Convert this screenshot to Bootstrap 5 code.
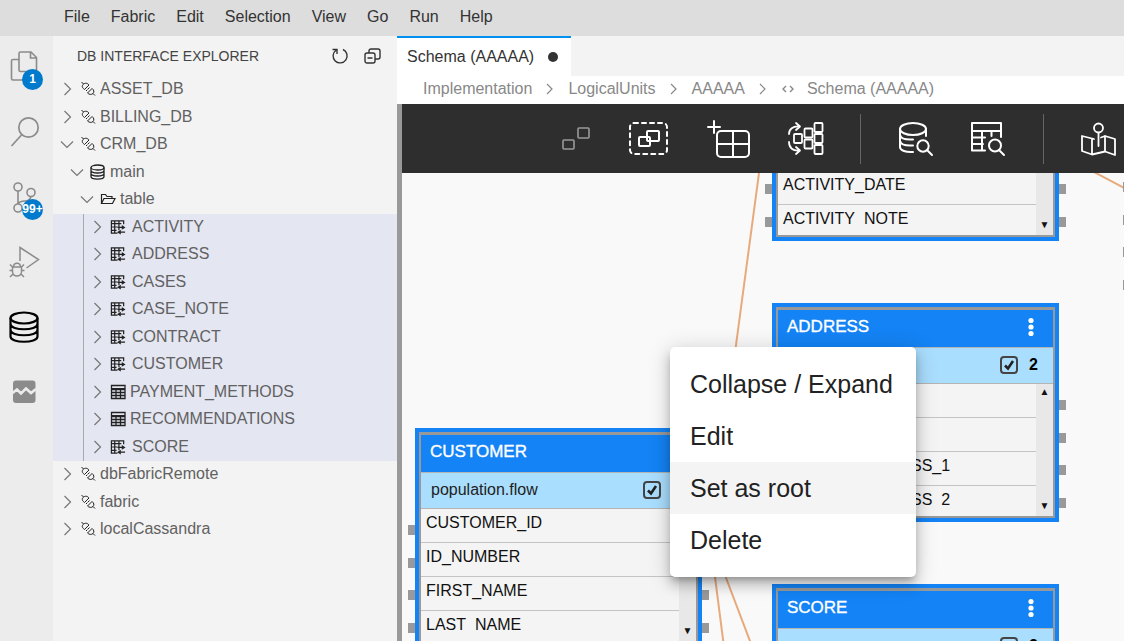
<!DOCTYPE html>
<html lang="en">
<head>
<meta charset="utf-8">
<meta name="viewport" content="width=device-width, initial-scale=1">
<title>Schema (AAAAA)</title>
<link href="https://cdn.jsdelivr.net/npm/bootstrap@5.3.0/dist/css/bootstrap.min.css" rel="stylesheet">
<style>
  body { font-family: "Liberation Sans", Arial, sans-serif; font-size: 16px; line-height: 20px; color: #333; }
  svg { overflow: visible; fill: none; stroke: currentColor; display: block; }
  button { color: inherit; }
  .plain-btn { background: none; border: 0; padding: 0; }

  .menubar { background: #ddd; height: 36px; padding: 0 54px; gap: 1px; }
  .menubar a { color: #333; padding: 0 10px; line-height: 34px; text-decoration: none; }

  .activity { background: #ececec; width: 53px; color: #8b8b8b; }
  .activity button { height: 65px; width: 48px; padding: 0 0 4px 8px; }
  .activity .count { right: 5px; top: 33px; min-width: 21px; height: 21px; line-height: 21px; border-radius: 11px; background: #007acc; color: #fff; font-size: 12px; font-weight: 700; }
  .activity .current { color: #000; }

  .explorer { background: #f3f3f3; width: 344px; }
  .explorer header { height: 40px; padding: 0 15px 0 24px; }
  .explorer h1 { font-size: 14px; line-height: 20px; font-weight: 400; color: #444; }
  .tree li { height: 27px; padding: 0 0 2px 7px; color: #616161; cursor: pointer; }
  .tree li:nth-child(odd) { height: 28px; }
  .tree .twist { width: 14px; height: 14px; margin-right: 6px; color: #777; }
  .tree .glyph { width: 16px; height: 16px; margin-right: 4px; color: #222; }
  .tree .lvl-1 { padding-left: 17px; }
  .tree .lvl-2 { padding-left: 27px; }
  .tree .lvl-3 { padding-left: 37px; background: linear-gradient(#aaa, #aaa) 30px 0 / 1px 100% no-repeat #e4e6f1; }
  .tree .lvl-3 .glyph { margin-right: 6px; }

  .tabs { background: #f3f3f3; height: 40px; }
  .tabs .tab { background: #fff; border-top: 2px solid #0090f1; padding: 0 13px 0 10px; gap: 14px; color: #333; }
  .dirty-dot { width: 10px; height: 10px; border-radius: 5px; background: #333; }
  .crumbs { height: 28px; padding: 0 26px 2px; color: #888; }
  .crumbs a { color: #888; text-decoration: none; }
  .crumbs .sep { margin: 0 12px; }

  .frame { border-left: 5px solid #999; }
  .tools { background: #2e2e2e; height: 69px; padding-left: 160px; gap: 38px; color: #fff; }
  .tools svg { stroke-width: 2; stroke-linejoin: round; stroke-linecap: round; }
  .tools .rule { width: 1px; height: 50px; background: #666; }
  .tools button:disabled { color: #999; }

  .board { background: #f9f9f9; }
  .links { stroke: #e8aa7c; stroke-width: 2; }
  .entity { position: absolute; width: 287px; height: 219px; border: 4px solid #1483f5; background: #999; padding: 3px 2px; color: #111; }
  .entity h2 { background: #1483f5; color: #fff; height: 37px; padding: 0 19px 3px 9px; font-size: 17px; line-height: 20px; -webkit-text-stroke: .02em #fff; }
  .entity .flow { background: #aadefe; border: solid #b4b4b4; border-width: 1px 0; height: 37px; padding: 0 15px 1px 10px; color: #222; gap: 11px; }
  .entity .flow .tick + b { color: #000; }
  .entity .with-count { padding-right: 35px; }
  .entity .fields { height: 132px; background: #f4f4f4; overflow: hidden; }
  .entity .fields li { height: 34px; padding: 4px 0 0 5px; border-bottom: 1px solid #c4c4c4; }
  .entity .fields li:last-child span { display: block; height: 16px; line-height: 20px; overflow: hidden; }
  .entity .scroller { width: 17px; background: #e8e8e8; padding: 4px 0 6px; font-size: 10px; line-height: 8px; }
  .ports { position: absolute; height: 108px; width: 7px; }
  .ports i { height: 10px; background: #999; }
  .entity .ports { top: 93px; }
  .ports.west { left: -11px; }
  .ports.east { right: -11px; }
  .tick { appearance: none; width: 18px; height: 18px; margin: 0; border: 2px solid #444; border-radius: 4px; background: url("data:image/svg+xml,%3Csvg xmlns='http://www.w3.org/2000/svg' viewBox='0 0 14 14'%3E%3Cpath d='M3 7.5l3 3L11 3' fill='none' stroke='%23222' stroke-width='2.6'/%3E%3C/svg%3E"); }

  .popup { position: absolute; left: 268px; top: 174px; width: 246px; padding: 11px 0; background: #fff; border-radius: 5px; box-shadow: 0 5px 6px -3px rgba(0,0,0,.25), 0 8px 12px 1px rgba(0,0,0,.16), 0 3px 22px 2px rgba(0,0,0,.14); }
  .popup button { height: 52px; padding: 0 20px 1px; font-size: 25px; line-height: 30px; color: #222; text-align: left; }
  .popup .hovered { background: #f4f4f4; }
</style>
</head>
<body class="d-flex flex-column vh-100 overflow-hidden">

<svg width="0" height="0" class="position-absolute" aria-hidden="true">
  <symbol id="closed" viewBox="0 0 14 14"><path d="M4.500 1l6 6-6 6" stroke-width="1.200"/></symbol>
  <symbol id="opened" viewBox="0 0 14 14"><path d="M1 4.500l6 6 6-6" stroke-width="1.200"/></symbol>
  <symbol id="plug" viewBox="0 0 16 16"><g stroke-width="1"><path d="M1.500 1l2 2M3 3.500C5 1.500 7.500 2 9 4L4.500 8.500C2.500 7 1.500 5.500 3 3.500Z M8 8l1.500-1.500M6 10l1.500-1.500M12 7.500c2 1.500 2.500 3.500 1 5-1.500 1.500-4 1-5.500-.500Z M13 12.500l2 2"/></g></symbol>
  <symbol id="base" viewBox="0 0 16 16"><g stroke-width="1.300"><ellipse cx="7.500" cy="3.500" rx="6.500" ry="2.500"/><path d="M1 3.500v9c0 3.400 13 3.400 13 0v-9M1 6.500c0 3.300 13 3.300 13 0M1 9.500c0 3.300 13 3.300 13 0"/></g></symbol>
  <symbol id="folder" viewBox="0 0 16 16"><path d="M1.500 12.500v-9h4l1.500 2h5v2M1.500 12.500l2.500-5h11l-2.500 5Z" stroke-width="1.200"/></symbol>
  <symbol id="grid-sync" viewBox="0 0 17 16"><path d="M8 14.500H1.500v-13H14.500V5M1.500 4.500H12M1.500 8H8M1.500 11.500H7M5 1.500v13M9.500 1.500v10" stroke-width="1.300"/><path d="M8 8.500h5M11 13.500h5" stroke-width="1.300"/><path d="M12.500 6l4 2.500-4 2.500ZM11.500 11L7.500 13.500l4 2.500Z" fill="currentColor" stroke="none"/></symbol>
  <symbol id="grid" viewBox="0 0 16 16"><path d="M1.500 1.500h13.500v13H1.500ZM1.500 5.500H15M1.500 8.500H15M1.500 11.500H15M6 5.500v9M10.500 5.500v9" stroke-width="1.300"/><path d="M1.500 4.500H15" stroke-width="1"/></symbol>
  <symbol id="crumb" viewBox="0 0 12 14"><path d="M3 2l5 5-5 5" stroke-width="1.200"/></symbol>
  <symbol id="kebab" viewBox="0 0 6 20"><g fill="currentColor" stroke="none"><circle cx="3" cy="3.500" r="2.600"/><circle cx="3" cy="10" r="2.600"/><circle cx="3" cy="16.500" r="2.600"/></g></symbol>
</svg>

<nav class="menubar d-flex flex-shrink-0" aria-label="Main menu">
  <a href="#">File</a><a href="#">Fabric</a><a href="#">Edit</a><a href="#">Selection</a><a href="#">View</a><a href="#">Go</a><a href="#">Run</a><a href="#">Help</a>
</nav>

<div class="d-flex flex-grow-1 overflow-hidden">
  <nav class="activity d-flex flex-column flex-shrink-0" aria-label="Views">
    <button class="plain-btn d-flex align-items-center position-relative" aria-label="Files">
      <svg width="32" height="32" stroke-width="1.600"><path d="M11 8.500H5A1.500 1.500 0 0 0 3.500 10v17.500A1.500 1.500 0 0 0 5 29h12M12.500 1H23l5.500 5.500V19a1.500 1.500 0 0 1-1.500 1.500H12.500A1.500 1.500 0 0 1 11 19V2.500A1.500 1.500 0 0 1 12.500 1ZM22.500 1v6h6"/></svg>
      <span class="count position-absolute text-center">1</span>
    </button>
    <button class="plain-btn d-flex align-items-center" aria-label="Search">
      <svg width="32" height="32" stroke-width="1.700"><circle cx="20.500" cy="11.500" r="9.700"/><path d="M13.700 18.700L3.500 30"/></svg>
    </button>
    <button class="plain-btn d-flex align-items-center position-relative" aria-label="Source control">
      <svg width="32" height="32" stroke-width="1.600"><circle cx="10" cy="6" r="4"/><circle cx="23" cy="11.500" r="4"/><circle cx="10" cy="27" r="4"/><path d="M10 10v13M23 15.500c-1 4-3 4.500-6 4.500s-6 .500-7 3"/></svg>
      <span class="count position-absolute text-center">99+</span>
    </button>
    <button class="plain-btn d-flex align-items-center" aria-label="Run and debug">
      <svg width="32" height="32" stroke-width="1.500"><path d="M12 15V1.500l18.500 12L18.500 22M4.500 21h9v4.500c0 6-9 6-9 0ZM5.500 21c0-5 7-5 7 0M1.500 24.500h3M13.500 24.500h3M2 18.500l3 3M16 18.500l-3 3M2 31l3-3M16 31l-3-3"/></svg>
    </button>
    <button class="plain-btn current d-flex align-items-center" aria-label="DB interface explorer">
      <svg width="32" height="32" stroke-width="2.200"><ellipse cx="16" cy="7" rx="13.500" ry="5.500"/><path d="M2.500 7v18.500c0 7 27 7 27 0V7M2.500 13c0 7 27 7 27 0M2.500 19c0 7 27 7 27 0"/></svg>
    </button>
    <button class="plain-btn d-flex align-items-center" aria-label="Graphs">
      <svg width="32" height="32"><rect x="5" y="4.500" width="22.500" height="22.500" rx="3" fill="currentColor" stroke="none"/><path d="M4.500 17l4.500-3.500 4 4 5-5 5 4.500 5-4" stroke="#ececec" stroke-width="2.600"/></svg>
    </button>
  </nav>

  <aside class="explorer flex-shrink-0">
    <header class="d-flex align-items-center">
      <h1 class="m-0 me-auto">DB INTERFACE EXPLORER</h1>
      <button class="plain-btn me-3" aria-label="Refresh"><svg width="16" height="16" stroke-width="1.400"><path d="M11 1.500A7 7 0 1 1 4 2.200M.500 1.500h4.500V6"/></svg></button>
      <button class="plain-btn" aria-label="Collapse all"><svg width="18" height="16" stroke-width="1.400"><rect x="1" y="5" width="10" height="10" rx="2"/><path d="M3.500 10h5M5 5V3a2 2 0 0 1 2-2h7a2 2 0 0 1 2 2v6a2 2 0 0 1-2 2h-3"/></svg></button>
    </header>
    <ul class="tree list-unstyled m-0" role="tree">
      <li class="d-flex align-items-center" role="treeitem"><svg class="twist"><use href="#closed"/></svg><svg class="glyph"><use href="#plug"/></svg><span>ASSET_DB</span></li>
      <li class="d-flex align-items-center" role="treeitem"><svg class="twist"><use href="#closed"/></svg><svg class="glyph"><use href="#plug"/></svg><span>BILLING_DB</span></li>
      <li class="d-flex align-items-center" role="treeitem"><svg class="twist"><use href="#opened"/></svg><svg class="glyph"><use href="#plug"/></svg><span>CRM_DB</span></li>
      <li class="lvl-1 d-flex align-items-center" role="treeitem"><svg class="twist"><use href="#opened"/></svg><svg class="glyph"><use href="#base"/></svg><span>main</span></li>
      <li class="lvl-2 d-flex align-items-center" role="treeitem"><svg class="twist"><use href="#opened"/></svg><svg class="glyph"><use href="#folder"/></svg><span>table</span></li>
      <li class="lvl-3 d-flex align-items-center" role="treeitem"><svg class="twist"><use href="#closed"/></svg><svg class="glyph"><use href="#grid-sync"/></svg><span>ACTIVITY</span></li>
      <li class="lvl-3 d-flex align-items-center" role="treeitem"><svg class="twist"><use href="#closed"/></svg><svg class="glyph"><use href="#grid-sync"/></svg><span>ADDRESS</span></li>
      <li class="lvl-3 d-flex align-items-center" role="treeitem"><svg class="twist"><use href="#closed"/></svg><svg class="glyph"><use href="#grid-sync"/></svg><span>CASES</span></li>
      <li class="lvl-3 d-flex align-items-center" role="treeitem"><svg class="twist"><use href="#closed"/></svg><svg class="glyph"><use href="#grid-sync"/></svg><span>CASE_NOTE</span></li>
      <li class="lvl-3 d-flex align-items-center" role="treeitem"><svg class="twist"><use href="#closed"/></svg><svg class="glyph"><use href="#grid-sync"/></svg><span>CONTRACT</span></li>
      <li class="lvl-3 d-flex align-items-center" role="treeitem"><svg class="twist"><use href="#closed"/></svg><svg class="glyph"><use href="#grid-sync"/></svg><span>CUSTOMER</span></li>
      <li class="lvl-3 d-flex align-items-center" role="treeitem"><svg class="twist"><use href="#closed"/></svg><svg class="glyph me-1"><use href="#grid"/></svg><span>PAYMENT_METHODS</span></li>
      <li class="lvl-3 d-flex align-items-center" role="treeitem"><svg class="twist"><use href="#closed"/></svg><svg class="glyph me-1"><use href="#grid"/></svg><span>RECOMMENDATIONS</span></li>
      <li class="lvl-3 d-flex align-items-center" role="treeitem"><svg class="twist"><use href="#closed"/></svg><svg class="glyph"><use href="#grid-sync"/></svg><span>SCORE</span></li>
      <li class="d-flex align-items-center" role="treeitem"><svg class="twist"><use href="#closed"/></svg><svg class="glyph"><use href="#plug"/></svg><span>dbFabricRemote</span></li>
      <li class="d-flex align-items-center" role="treeitem"><svg class="twist"><use href="#closed"/></svg><svg class="glyph"><use href="#plug"/></svg><span>fabric</span></li>
      <li class="d-flex align-items-center" role="treeitem"><svg class="twist"><use href="#closed"/></svg><svg class="glyph"><use href="#plug"/></svg><span>localCassandra</span></li>
    </ul>
  </aside>

  <main class="d-flex flex-column flex-grow-1 overflow-hidden bg-white">
    <div class="tabs d-flex flex-shrink-0">
      <button class="tab plain-btn border-start-0 border-end-0 border-bottom-0 d-flex align-items-center"><span>Schema (AAAAA)</span><span class="dirty-dot"></span></button>
    </div>
    <nav class="crumbs d-flex align-items-center flex-shrink-0" aria-label="Breadcrumb">
      <a href="#">Implementation</a><svg class="sep" width="12" height="14"><use href="#crumb"/></svg>
      <a href="#">LogicalUnits</a><svg class="sep" width="12" height="14"><use href="#crumb"/></svg>
      <a href="#">AAAAA</a><svg class="sep" width="12" height="14"><use href="#crumb"/></svg>
      <svg class="me-2" width="14" height="12" stroke="#4a7a9c" stroke-width="1.400"><path d="M5 3L2 6l3 3M9 3l3 3-3 3"/></svg>
      <a href="#" class="ms-1">Schema (AAAAA)</a>
    </nav>

    <div class="frame d-flex flex-column flex-grow-1 overflow-hidden">
      <div class="tools d-flex align-items-center flex-shrink-0" role="toolbar" aria-label="Schema tools">
        <button class="plain-btn" disabled aria-label="Link"><svg width="28" height="24"><rect x="1" y="13" width="11" height="9" rx="1" stroke-width="1.600"/><rect x="16" y="1" width="11" height="10" rx="1" stroke-width="1.600"/></svg></button>
        <button class="plain-btn" aria-label="Select group"><svg width="42" height="34"><rect x="2" y="1" width="37" height="31" rx="4" stroke-dasharray="4 4"/><rect x="11" y="15" width="11" height="9" rx="1"/><rect x="19" y="9" width="12" height="10" rx="1"/></svg></button>
        <button class="plain-btn" aria-label="Add table"><svg width="42" height="38"><rect x="9" y="11" width="32" height="26" rx="4"/><path d="M25 11v26M9 24h32M6 1v12M0 7h12"/></svg></button>
        <button class="plain-btn" aria-label="Auto layout"><svg width="34" height="34"><g stroke-width="1.800"><rect x="6" y="12" width="8" height="9" rx="1"/><rect x="16.500" y="6.500" width="8" height="9" rx="1"/><rect x="16.500" y="17.500" width="8" height="9" rx="1"/><rect x="26.500" y="1" width="8" height="9" rx="1"/><rect x="26.500" y="12" width="8" height="9" rx="1"/><rect x="26.500" y="23" width="8" height="9" rx="1"/><path d="M1 12C1 7 5 4 11 4.500M8 1l4 3.500L8 8M1 20c0 6 4 9 10 8.500M8 25l4 3.500L8 32"/></g></svg></button>
        <span class="rule"></span>
        <button class="plain-btn" aria-label="Search database"><svg width="34" height="34"><ellipse cx="14" cy="7" rx="13" ry="6"/><path d="M1 7v18c0 3.500 6 5.500 13 5M27 7v7M1 13c1 4 6 5 13 4.500M1 19c1 4 6 5 13 4.500M28 28l5 5"/><circle cx="24" cy="24" r="5.700"/></svg></button>
        <button class="plain-btn" aria-label="Search table"><svg width="34" height="34"><path d="M14 28.500H1V1h29v14M1 9h29M1 15.500h13M1 22h11M11 9v19.500M20.500 9v5M28 28l5 5"/><circle cx="24" cy="23.500" r="6"/></svg></button>
        <span class="rule"></span>
        <button class="plain-btn" aria-label="Map"><svg width="34" height="34"><g stroke-width="1.800"><path d="M12 17L0 14v15l10 3.500 13-3 10 3.500V17l-10-3-4 1.500M10 17v15.500M23 14v15.500M16.500 11v13"/><circle cx="16.500" cy="6" r="4.500"/></g></svg></button>
      </div>

      <div class="board position-relative flex-grow-1 overflow-hidden">
        <svg class="links position-absolute top-0 start-0 w-100 h-100" aria-hidden="true">
          <path d="M357 0L303 404M304 334L322 474M307 360L351 476M692-1L724 16"/>
        </svg>

        <section class="entity" aria-label="Activity" style="left:370px;top:-151px">
          <div class="ports west d-flex flex-column justify-content-between"><i></i><i></i><i></i><i></i></div>
          <div class="ports east d-flex flex-column justify-content-between"><i></i><i></i><i></i><i></i></div>
          <h2 class="m-0"></h2>
          <div class="flow"></div>
          <div class="fields d-flex">
            <ul class="list-unstyled m-0 flex-grow-1"><li></li><li></li><li>ACTIVITY_DATE</li><li><span>ACTIVITY_NOTE</span></li></ul>
            <div class="scroller d-flex flex-column justify-content-end text-center">▼</div>
          </div>
        </section>

        <section class="entity" style="left:370px;top:130px">
          <div class="ports east d-flex flex-column justify-content-between"><i></i><i></i><i></i><i></i></div>
          <h2 class="d-flex align-items-center justify-content-between m-0">ADDRESS <button class="plain-btn" aria-label="Address menu"><svg width="6" height="20"><use href="#kebab"/></svg></button></h2>
          <div class="flow d-flex align-items-center justify-content-end"><input class="tick" type="checkbox" checked aria-label="Address population"><b>2</b></div>
          <div class="fields d-flex">
            <ul class="list-unstyled m-0 flex-grow-1"><li></li><li></li><li>STREET_ADDRESS_1</li><li><span>STREET_ADDRESS_2</span></li></ul>
            <div class="scroller d-flex flex-column justify-content-between text-center"><span>▲</span><span>▼</span></div>
          </div>
        </section>

        <section class="entity" style="left:370px;top:411px">
          <h2 class="d-flex align-items-center justify-content-between m-0">SCORE <button class="plain-btn" aria-label="Score menu"><svg width="6" height="20"><use href="#kebab"/></svg></button></h2>
          <div class="flow d-flex align-items-center justify-content-end"><input class="tick" type="checkbox" checked aria-label="Score population"><b>2</b></div>
          <div class="fields"></div>
        </section>

        <section class="entity" style="left:13px;top:255px">
          <div class="ports west d-flex flex-column justify-content-between"><i></i><i></i><i></i><i></i></div>
          <div class="ports east d-flex flex-column justify-content-between"><i></i><i></i><i></i><i></i></div>
          <h2 class="d-flex align-items-center justify-content-between m-0">CUSTOMER</h2>
          <div class="flow with-count d-flex align-items-center"><label for="customer-flow" class="me-auto">population.flow</label><input class="tick" id="customer-flow" type="checkbox" checked></div>
          <div class="fields d-flex">
            <ul class="list-unstyled m-0 flex-grow-1"><li>CUSTOMER_ID</li><li>ID_NUMBER</li><li>FIRST_NAME</li><li><span>LAST_NAME</span></li></ul>
            <div class="scroller d-flex flex-column justify-content-end text-center">▼</div>
          </div>
        </section>

        <div class="ports d-flex flex-column justify-content-between" style="left:721px;top:9px"><i></i><i></i><i></i><i></i></div>

        <div class="popup d-flex flex-column" role="menu">
          <button class="plain-btn" role="menuitem">Collapse / Expand</button>
          <button class="plain-btn" role="menuitem">Edit</button>
          <button class="plain-btn hovered" role="menuitem">Set as root</button>
          <button class="plain-btn" role="menuitem">Delete</button>
        </div>
      </div>
    </div>
  </main>
</div>
<script src="https://cdn.jsdelivr.net/npm/bootstrap@5.3.0/dist/js/bootstrap.bundle.min.js"></script>
</body>
</html>
